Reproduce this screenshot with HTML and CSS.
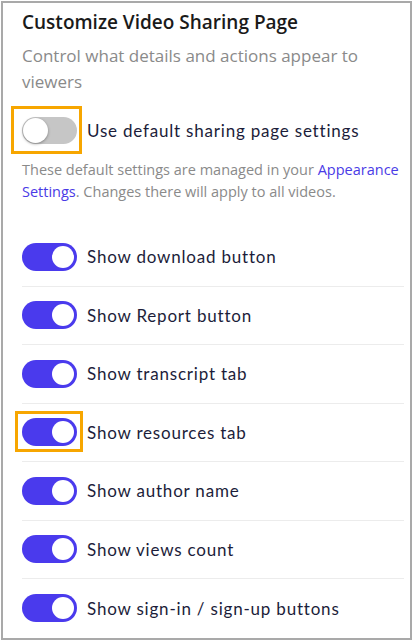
FILE: index.html
```html
<!DOCTYPE html>
<html lang="en">
	<head>
		<meta charset="utf-8" />
		<title>Sharing page</title>
		<link rel="stylesheet" href="styles.css">
	</head>
	<body>
		<div class="panel">
			<h2 class="title">Customize Video Sharing Page</h2>
			<p class="subtitle">Control what details and actions appear to viewers</p>

			<div class="default-row">
				<span class="switch off marked"><i></i></span>
				<span class="label">Use default sharing page settings</span>
			</div>
			<p class="note">These default settings are managed in your <a href="#">Appearance Settings</a>. Changes there will apply to all videos.</p>

			<ul class="options">
				<li><span class="switch"><i></i></span><span class="label">Show download button</span></li>
				<li><span class="switch"><i></i></span><span class="label">Show Report button</span></li>
				<li><span class="switch"><i></i></span><span class="label">Show transcript tab</span></li>
				<li><span class="switch marked"><i></i></span><span class="label">Show resources tab</span></li>
				<li><span class="switch"><i></i></span><span class="label">Show author name</span></li>
				<li><span class="switch"><i></i></span><span class="label">Show views count</span></li>
				<li><span class="switch"><i></i></span><span class="label">Show sign-in / sign-up buttons</span></li>
			</ul>
		</div>
	</body>
</html>
```

FILE: styles.css
```css
*{margin:0;padding:0;box-sizing:border-box;}
li{list-style:none;}
body{background:#fff;}
.panel{
	width:411px;
	height:639px;
	margin:1px;
	border:2px solid #a9a9a9;
	padding:6px 6px 0 19px;
	font-family:'Open Sans',sans-serif;
}
.title{
	font-size:19px;
	font-weight:600;
	line-height:26px;
	color:#1a1a1a;
}
.subtitle{
	margin-top:8px;
	font-size:17px;
	line-height:26px;
	color:#8a8a8a;
}
.default-row{
	display:flex;
	align-items:center;
	height:46px;
	margin-top:12px;
}
.label{
	font-family:Lato,sans-serif;
	font-size:17px;
	letter-spacing:0.8px;
	color:#1c1d3a;
	margin-left:10px;
}
.note{
	margin-top:6px;
	font-size:14.5px;
	line-height:22px;
	color:#8a8a8a;
}
.note a{
	color:#4a3be6;
	text-decoration:none;
}
.options{
	margin-top:25px;
}
.options li{
	display:flex;
	align-items:center;
	height:58.5px;
	border-bottom:1px solid #ececec;
}
.options li:last-child{
	border-bottom:0;
}
/* toggle switch */
.switch{
	position:relative;
	flex:none;
	width:55px;
	height:28px;
	border-radius:14px;
	background:#4a3aed;
}
.switch i{
	position:absolute;
	right:3px;
	top:3px;
	width:22px;
	height:22px;
	border-radius:50%;
	background:#fff;
}
.switch.off{
	height:27px;
	background:#c6c6c6;
}
.switch.off i{
	right:auto;
	left:1px;
	top:1px;
	width:25px;
	height:25px;
	box-shadow:0 1px 3px rgba(0,0,0,.35);
}
/* highlight frame */
.switch.marked::after{
	content:'';
	position:absolute;
	left:-11px;
	top:-11px;
	right:-5px;
	bottom:-10px;
	border:3px solid #f7a600;
}
.options .switch.marked::after{
	left:-7px;
	top:-7px;
	right:-6px;
	bottom:-6px;
}
```
